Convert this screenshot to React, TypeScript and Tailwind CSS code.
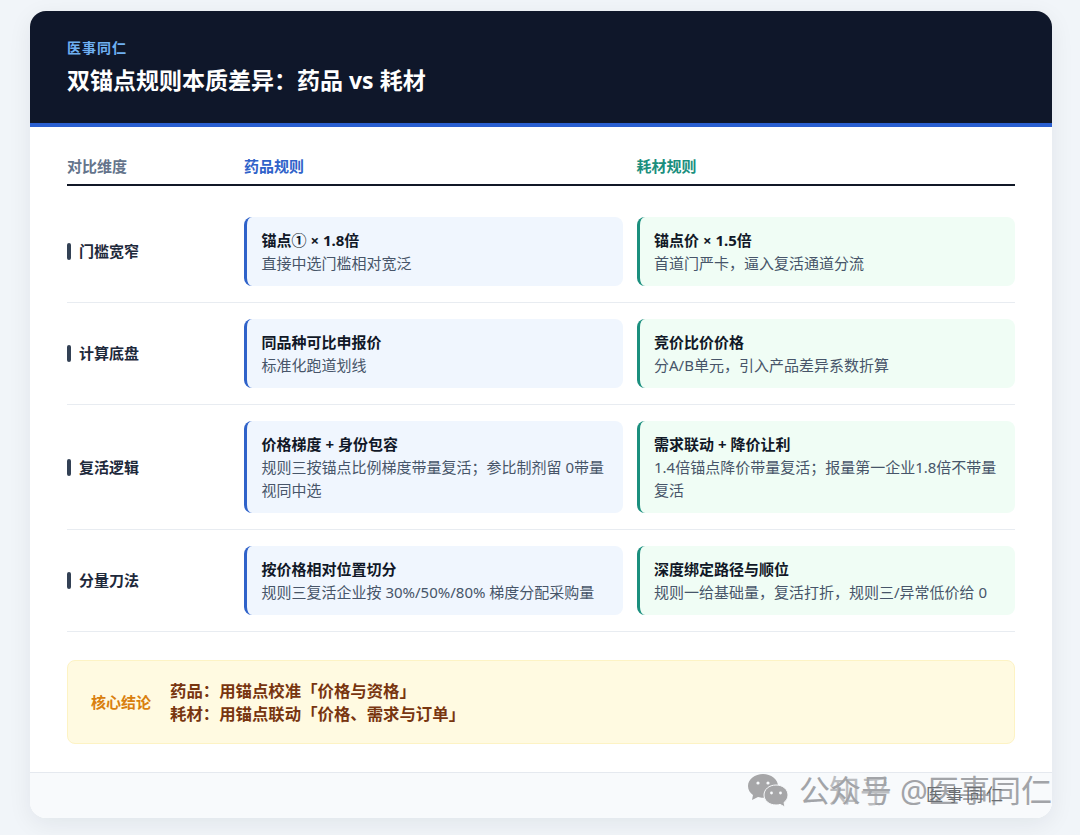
const rows = [
  {
    label: '门槛宽窄',
    drugTitle: '锚点① × 1.8倍',
    drugText: '直接中选门槛相对宽泛',
    supplyTitle: '锚点价 × 1.5倍',
    supplyText: '首道门严卡，逼入复活通道分流',
  },
  {
    label: '计算底盘',
    drugTitle: '同品种可比申报价',
    drugText: '标准化跑道划线',
    supplyTitle: '竞价比价价格',
    supplyText: '分A/B单元，引入产品差异系数折算',
  },
  {
    label: '复活逻辑',
    drugTitle: '价格梯度 + 身份包容',
    drugText: '规则三按锚点比例梯度带量复活；参比制剂留 0带量视同中选',
    supplyTitle: '需求联动 + 降价让利',
    supplyText: '1.4倍锚点降价带量复活；报量第一企业1.8倍不带量复活',
  },
  {
    label: '分量刀法',
    drugTitle: '按价格相对位置切分',
    drugText: '规则三复活企业按 30%/50%/80% 梯度分配采购量',
    supplyTitle: '深度绑定路径与顺位',
    supplyText: '规则一给基础量，复活打折，规则三/异常低价给 0',
  },
]

function RuleCard({ title, text, tone }: { title: string; text: string; tone: 'drug' | 'supply' }) {
  return (
    <div
      className={`rounded-lg border-l-[3px] py-[11.5px] pl-[14.5px] pr-[15px] text-[15px] leading-[23px] ${
        tone === 'drug' ? 'border-[#2f62c9] bg-[#f0f6fe]' : 'border-[#1b8f7e] bg-[#f0fdf5]'
      }`}
    >
      <p className="font-bold text-[#111827]">{title}</p>
      <p className="text-[#475569]">{text}</p>
    </div>
  )
}

function WechatMark() {
  return (
    <svg className="h-[34px] w-[42px]" viewBox="0 0 42 34" fill="#a6a6a8">
      <path d="M16 1C8 1 1 6 1 13c0 4 2 7 5 9l-1 5 6-3c2 .5 3 .7 5 .7C24 24.700 31 20 31 13S24 1 16 1z" />
      <path d="M29 12c-7 0-12 4.500-12 10s5 10 12 10c1.500 0 3-.2 4-.6l5 2.600-1-4.500c2.500-2 4-4.500 4-7.500 0-5.500-5-10-12-10z" stroke="#f8fafc" strokeWidth="1" />
      <circle cx="11" cy="10" r="1.600" fill="#f8fafc" />
      <circle cx="21" cy="10" r="1.600" fill="#f8fafc" />
      <circle cx="24.500" cy="20" r="1.400" fill="#f8fafc" />
      <circle cx="33.500" cy="20" r="1.400" fill="#f8fafc" />
    </svg>
  )
}

export default function App() {
  return (
    <div
      className="h-[835px] overflow-hidden bg-[#f1f5f9] px-[30px] pt-[11px]"
      style={{ fontFamily: '"Noto Sans", "Noto Sans CJK SC", sans-serif' }}
    >
      <div className="relative flex h-[807px] w-[1022px] flex-col overflow-hidden rounded-2xl bg-white shadow-[0_6px_24px_rgba(15,23,42,0.07)]">
        {/* Header */}
        <header className="h-[116px] border-b-4 border-[#2a5fd0] bg-[#0f172a] px-[37px] pt-[27px]">
          <p className="text-[14px] font-bold leading-[20px] tracking-[1px] text-[#6fb0f2]">医事同仁</p>
          <h1 className="mt-[6px] text-[23px] font-bold leading-[32px] text-white">双锚点规则本质差异：药品 vs 耗材</h1>
        </header>

        {/* Table */}
        <main className="flex-1 px-[37px] pt-[27px]">
          <div className="grid h-[32px] grid-cols-[163px_1fr_1fr] gap-x-[14px] border-b-2 border-[#111827] text-[15px] font-bold leading-[24px]">
            <div className="text-[#64748b]">对比维度</div>
            <div className="text-[#2f62c9]">药品规则</div>
            <div className="text-[#1b8f7e]">耗材规则</div>
          </div>

          <div className="mt-[15px]">
            {rows.map((row) => (
              <div
                key={row.label}
                className="grid grid-cols-[163px_1fr_1fr] items-center gap-x-[14px] border-b border-[#e8ecf1] py-[16px]"
              >
                <div className="flex items-center gap-2 text-[15px] font-bold text-[#1e293b]">
                  <span className="h-[17px] w-1 rounded-sm bg-[#334155]" />
                  {row.label}
                </div>
                <RuleCard title={row.drugTitle} text={row.drugText} tone="drug" />
                <RuleCard title={row.supplyTitle} text={row.supplyText} tone="supply" />
              </div>
            ))}
          </div>

          {/* Conclusion */}
          <div className="mt-[28px] flex h-[84px] items-center gap-[19px] rounded-lg border border-[#fdf3c4] bg-[#fffae1] px-[23px]">
            <span className="text-[15px] font-bold text-[#d97f0e]">核心结论</span>
            <div className="text-[16.4px] font-bold leading-[23px] text-[#78350f]">
              <p>药品：用锚点校准「价格与资格」</p>
              <p>耗材：用锚点联动「价格、需求与订单」</p>
            </div>
          </div>
        </main>

        <footer className="h-[46px] border-t border-[#e5e9ef] bg-[#f8fafc]" />

        {/* Watermark */}
        <div className="absolute bottom-[11px] right-0 flex items-center gap-[10px] text-[#a2a4a8]">
          <WechatMark />
          <div className="relative whitespace-nowrap text-[31px] leading-[34px]">
            <span>公众号 @医事同仁</span>
            <span className="absolute left-[30px] top-0 opacity-70">知乎</span>
            <span className="absolute right-[46px] top-[12px] text-[17px] leading-[20px] tracking-[3px] text-[#6b6e72]">医事同仁</span>
          </div>
        </div>
      </div>
    </div>
  )
}
